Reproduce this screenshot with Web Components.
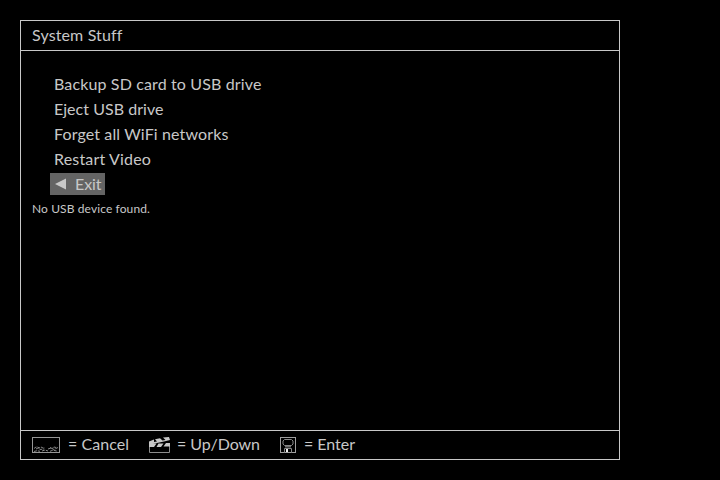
<!DOCTYPE html>
<html lang="en">
<head>
<meta charset="utf-8">
<title>System Stuff</title>
<style>
html, body { margin: 0; background: #000; }
body { width: 720px; height: 480px; overflow: hidden; color: #c8c8c8; font: 16px/25px Lato, "Noto Sans", sans-serif; }
</style>
</head>
<body>
<menu-screen>
  <fit-text slot="title" width="90.5">System Stuff</fit-text>
  <menu-item><fit-text width="207.5">Backup SD card to USB drive</fit-text></menu-item>
  <menu-item><fit-text width="109.5">Eject USB drive</fit-text></menu-item>
  <menu-item><fit-text width="174.5">Forget all WiFi networks</fit-text></menu-item>
  <menu-item><fit-text width="97">Restart Video</fit-text></menu-item>
  <menu-item selected><fit-text width="26.5">Exit</fit-text></menu-item>
  <fit-text slot="status" width="118">No USB device found.</fit-text>
  <key-hint slot="keys" icon="screen" style="width:117px"><fit-text width="61">= Cancel</fit-text></key-hint>
  <key-hint slot="keys" icon="clapper" style="width:131px"><fit-text width="83">= Up/Down</fit-text></key-hint>
  <key-hint slot="keys" icon="disk"><fit-text width="51">= Enter</fit-text></key-hint>
</menu-screen>
<script>
// Text run whose letter spacing is adjusted to fill a given width.
customElements.define('fit-text', class extends HTMLElement {
  connectedCallback() {
    if (this.shadowRoot) return;
    this.attachShadow({ mode: 'open' }).innerHTML =
      '<style>:host{display:inline-block;white-space:nowrap;font-kerning:normal;font-variant-ligatures:none}</style><slot></slot>';
    requestAnimationFrame(() => this.fit());
    this.fit();
  }
  fit() {
    this.style.letterSpacing = '0px';
    const natural = this.getBoundingClientRect().width;
    const gap = (Number(this.getAttribute('width')) - natural) / this.textContent.length;
    this.style.letterSpacing = gap.toFixed(3) + 'px';
  }
});

customElements.define('menu-item', class extends HTMLElement {
  constructor() {
    super();
    this.attachShadow({ mode: 'open' }).innerHTML = `
<style>
:host { display: flex; align-items: center; height: 25px; padding-left: 33px; }
.row { display: flex; align-items: center; height: 22px; line-height: 22px; }
svg { display: none; }
:host([selected]) { padding-left: 29px; }
:host([selected]) .row { box-sizing: border-box; width: 55px; background: #646464; padding-left: 5px; gap: 9px; }
:host([selected]) svg { display: block; flex: none; }
</style>
<div class="row"><svg width="11" height="12"><path d="M0 6 11 .5v11z" fill="#c8c8c8"/></svg><slot></slot></div>`;
  }
});

const icons = {
  screen: `<svg width="28" height="17" fill="none" stroke="#969696"><rect x=".5" y=".5" width="27" height="15"/>
    <path d="M2 11.5l2-1.5 2 0 1 1 2-1 2 1 2 0M18 10.5l2 1 2-1.5 2 .5 1-.5M4 12l2-1 2 1.5 4-.5M16 12l3-1 3 1.5 4-2M2 14.5l3-.8 3 .6M10 14l3-1 3 1M18 14.3l3-1.2 4 1" stroke-width=".9" stroke-dasharray="3 1"/></svg>`,
  clapper: `<svg width="22" height="17"><path d="M.5 6v9.5h20V6" fill="none" stroke="#8c8c8c"/>
    <path d="M0 4.5 5 2.5V5L8 4.5 6 2.2 11 1.2 13.5 3.6 16.5 3 14 .6 20 0 21 3 15 4.6 8 6 2 7.4 0 7z" fill="#c8c8c8"/>
    <path d="M0 6.5H7.5L5 10H0zM9.5 6.5H14.5L12 10H7.5zM17 6H21V9.5H14.5z" fill="#c8c8c8"/></svg>`,
  disk: `<svg width="16" height="17" fill="none" stroke="#a0a0a0"><rect x=".5" y=".5" width="15" height="15"/>
    <path d="M4.5 2.5h7l1.5 1.5v3L11.5 8.5h-7L3 7V4z" stroke="#888"/>
    <path d="M5 9h6v1.5H5z" fill="#707070" stroke="none"/>
    <path d="M4.5 16v-4.5h7V16" stroke="#888"/><path d="M6 12h2v3H6z" fill="#eee" stroke="none"/></svg>`
};
customElements.define('key-hint', class extends HTMLElement {
  connectedCallback() {
    if (this.shadowRoot) return;
    this.attachShadow({ mode: 'open' }).innerHTML = `
<style>
:host { display: flex; align-items: center; gap: 8px; flex: none; }
:host([icon="clapper"]) { gap: 6px; }
svg { display: block; flex: none; margin-top: 3px; }
::slotted(*) { margin-bottom: 2px; }
</style>${icons[this.getAttribute('icon')]}<slot></slot>`;
  }
});

customElements.define('menu-screen', class extends HTMLElement {
  constructor() {
    super();
    this.attachShadow({ mode: 'open' }).innerHTML = `
<style>
:host { display: block; padding: 20px; }
.frame { box-sizing: border-box; width: 600px; height: 440px; border: 1px solid #c8c8c8; display: grid; grid-template-rows: 30px 1fr 29px; }
header { box-sizing: border-box; border-bottom: 1px solid #c8c8c8; padding-left: 11px; line-height: 27px; }
main { padding-top: 20px; }
.status { padding: 1px 0 0 11px; font-size: 12px; line-height: 24px; }
footer { box-sizing: border-box; border-top: 1px solid #c8c8c8; height: 29px; padding: 0 0 2px 11px; display: flex; align-items: center; }
</style>
<div class="frame">
  <header><slot name="title"></slot></header>
  <main><slot></slot><div class="status"><slot name="status"></slot></div></main>
  <footer><slot name="keys"></slot></footer>
</div>`;
  }
});
</script>
</body>
</html>
